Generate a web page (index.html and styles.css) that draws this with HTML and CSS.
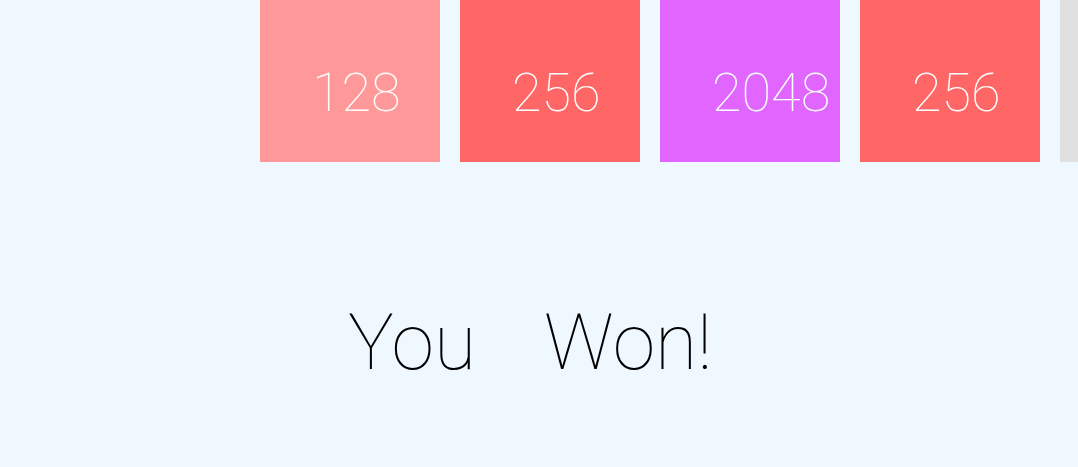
FILE: index.html
```html
<!DOCTYPE html>
<html>
<head>
<meta charset="utf-8">
<link rel="stylesheet" href="styles.css">
</head>
<body>
<div class="board">
  <div class="row">
    <div class="tile t128">128</div>
    <div class="tile t256">256</div>
    <div class="tile t2048">2048</div>
    <div class="tile t256">256</div>
    <div class="tile tempty"></div>
  </div>
  <div class="message"><span>You</span><span>Won!</span></div>
</div>
</body>
</html>
```
FILE: styles.css
```css
html, body {
  margin: 0;
  padding: 0;
  background: #f0f8ff;
  overflow: hidden;
}
body {
  width: 1078px;
  height: 467px;
  font-family: "Roboto", "Liberation Sans", sans-serif;
  font-weight: 100;
}
.row {
  display: flex;
  gap: 20px;
  padding-left: 260px;
  margin-top: -18px;
}
.tile {
  flex: 0 0 180px;
  min-width: 0;
  height: 180px;
  box-sizing: border-box;
  padding-left: 52px;
  color: #ffffff;
  font-size: 54px;
  line-height: 1;
  display: flex;
  align-items: center;
  padding-top: 42px;
  white-space: nowrap;
}
.t128 { background: #ff9999; }
.t256 { background: #ff6666; }
.t2048 { background: #e066ff; }
.tempty { background: #e0e0e0; }
.message {
  display: flex;
  gap: 68px;
  padding-left: 348px;
  margin-top: 143px;
  font-size: 77px;
  line-height: 1;
  color: #000;
}
```
